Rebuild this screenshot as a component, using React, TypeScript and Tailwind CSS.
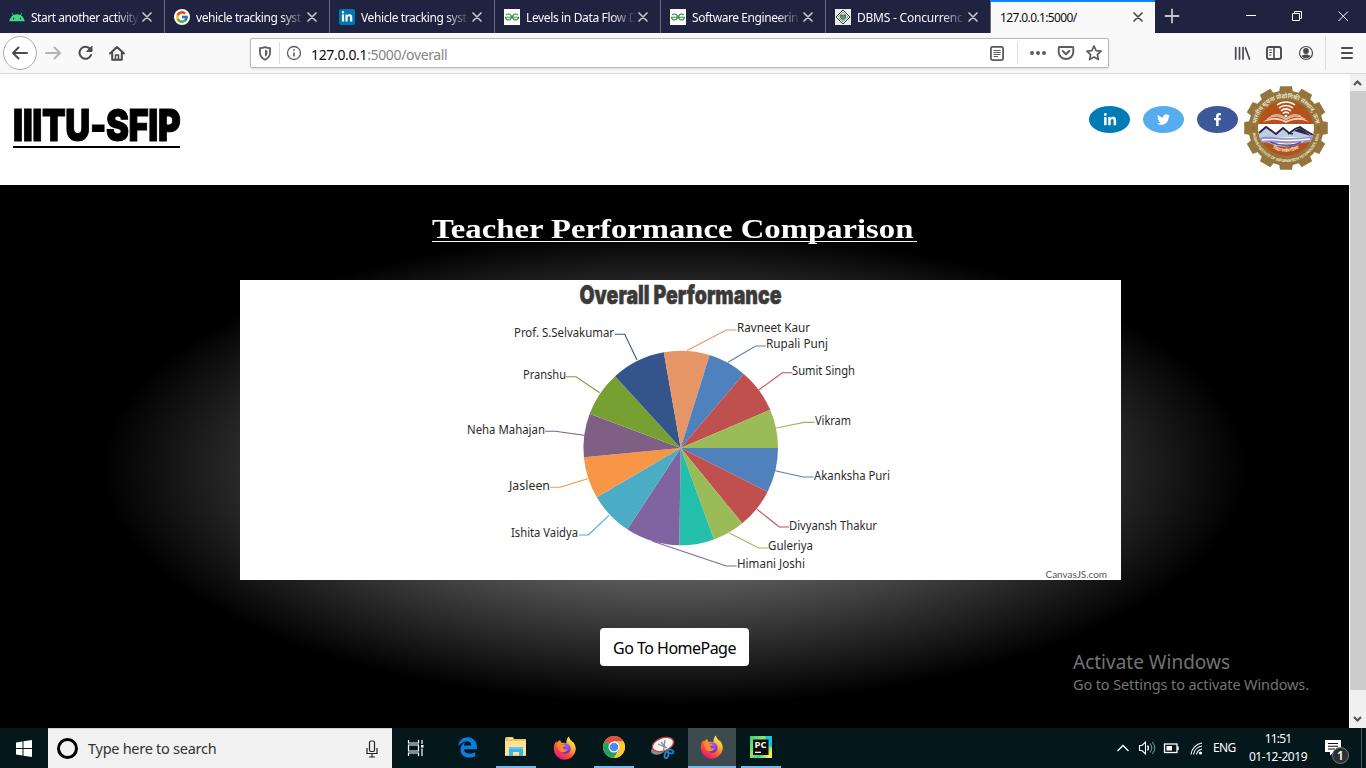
import React from "react";
import { FcGoogle } from "react-icons/fc";
import { FaEdgeLegacy, FaFacebookF, FaLinkedinIn, FaTwitter } from "react-icons/fa";
import { SiGeeksforgeeks } from "react-icons/si";

const UI = "font-['Noto_Sans',sans-serif]";

function AndroidIcon() {
  return (
    <svg width="16" height="16" viewBox="0 0 16 16">
      <path d="M0.3 12.3C0.7 9.8 2 7.7 4 6.5L2.8 4.3l.6-.3 1.2 2.1a8.300 8.300 0 0 1 6.800 0L12.600 4l.6.3L12 6.500c2 1.200 3.300 3.300 3.700 5.800z" fill="#3ddc84" />
      <circle cx="4.600" cy="9.600" r=".8" fill="#202340" />
      <circle cx="11.400" cy="9.600" r=".8" fill="#202340" />
    </svg>
  );
}

function GoogleTile() {
  return (
    <span className="flex size-4 items-center justify-center rounded-full bg-white">
      <FcGoogle size={14} />
    </span>
  );
}

function LinkedInTile() {
  return (
    <span className="flex size-4 items-center justify-center rounded-[2px] bg-[#0077b5] text-white">
      <FaLinkedinIn size={12} />
    </span>
  );
}

function GeeksTile() {
  return (
    <span className="flex size-4 items-center justify-center bg-white text-[#2f8d46]">
      <SiGeeksforgeeks size={14} />
    </span>
  );
}

function DiamondTile() {
  return (
    <svg width="16" height="16" viewBox="0 0 16 16">
      <rect width="16" height="16" fill="#e9ece9" />
      <path d="M8 1 15 8 8 15 1 8z" fill="#fff" stroke="#333" strokeWidth="1" />
      <path d="M8 3.300 12.700 8 8 12.700 3.300 8z" fill="#fff" stroke="#555" strokeWidth=".8" />
      <path d="M5.500 6h5v3L8 11 5.500 9z" fill="#4f9a70" stroke="#2d5e42" strokeWidth=".7" />
    </svg>
  );
}

function Close({ color }: { color: string }) {
  return (
    <svg width="10" height="10" viewBox="0 0 10 10" stroke={color} strokeWidth="1.700" strokeLinecap="round">
      <path d="M1 1l8 8M9 1 1 9" />
    </svg>
  );
}

const tabs = [
  { title: "Start another activity", icon: <AndroidIcon />, w: "w-[165px]", track: "tracking-[-0.48px]" },
  { title: "vehicle tracking syst", icon: <GoogleTile />, w: "w-[165px]", track: "tracking-[-0.4px]" },
  { title: "Vehicle tracking syst", icon: <LinkedInTile />, w: "w-[165px]", track: "tracking-[-0.4px]" },
  { title: "Levels in Data Flow D", icon: <GeeksTile />, w: "w-[166px]", track: "tracking-[-0.36px]" },
  { title: "Software Engineerin", icon: <GeeksTile />, w: "w-[165px]", track: "tracking-[-0.42px]" },
  { title: "DBMS - Concurrenc", icon: <DiamondTile />, w: "w-[165px]", track: "tracking-[-0.22px]" },
];

function TabBar() {
  return (
    <div className="flex h-[33px] shrink-0 bg-[#202340]">
      {tabs.map((t) => (
        <div key={t.title} className={`flex ${t.w} shrink-0 items-center border-r border-[#6a6b80] pl-[9px] pr-[12px]`}>
          <span className="flex w-4 shrink-0">{t.icon}</span>
          <span className={`ml-[6px] flex-1 overflow-hidden whitespace-nowrap pt-[2px] text-[12px] text-[#f9f9fa] [mask-image:linear-gradient(to_right,black_78%,transparent)] ${t.track}`}>
            {t.title}
          </span>
          <span className="ml-[2px] shrink-0"><Close color="#c3c4cf" /></span>
        </div>
      ))}
      <div className="flex w-[164px] shrink-0 items-center justify-between border-t-2 border-[#0a84ff] bg-[#f9f9fa] pb-[2px] pl-[9px] pr-[12px]">
        <span className="pt-[2px] text-[12px] tracking-[-0.62px] text-[#0c0c0d]">127.0.0.1:5000/</span>
        <Close color="#4a4a4f" />
      </div>
      <svg className="shrink-0" width="211" height="33" viewBox="1155 0 211 33" fill="none">
        <path d="M1172 9.500v13M1165.500 16h13" stroke="#c3c4cf" strokeWidth="1.800" strokeLinecap="round" />
        <path d="M1246 15.500h10" stroke="#fff" />
        <path d="M1292.500 13.500h7v7h-7zM1294.500 13v-1.500h7v7H1300" stroke="#fff" />
        <path d="M1338.500 11.500l9.500 9.500M1348 11.500l-9.500 9.500" stroke="#fff" />
      </svg>
    </div>
  );
}

function ToolBar() {
  return (
    <div className="flex h-[41px] shrink-0 border-b border-[#d7d7db] bg-[#f9f9fa]">
      <svg className="shrink-0" width="250" height="40" viewBox="0 33 250 40" fill="none" stroke="#4a4a4f" strokeWidth="2" strokeLinecap="round" strokeLinejoin="round">
        <circle cx="20" cy="53" r="16.500" fill="#fff" stroke="#adadb0" strokeWidth="1" />
        <path d="M13 53h14M18.500 47.500 13 53l5.500 5.500" />
        <path d="M46 53h14M54.500 47.500 60 53l-5.500 5.500" stroke="#b4b4b6" />
        <path d="M90.500 49.500a6 6 0 1 0 .6 5.500" />
        <path d="M92 46.500v5h-5z" fill="#4a4a4f" strokeWidth="1" />
        <path d="M110 53.500l7-6.500 7 6.500M112.200 53v6.700h9.600V53" />
        <path d="M115.500 59v-4h3v4" strokeWidth="1.500" />
      </svg>
      <div className="mt-[5px] flex h-[30px] w-[859px] shrink-0 items-center rounded-[2px] border border-[#b9b9bc] bg-white shadow-sm">
        <svg className="shrink-0" width="54" height="28" viewBox="251 39 54 28" fill="none" stroke="#5c5c60">
          <path d="M265 47.200c2 .8 3.500 1 5 1v4.600c0 3.300-2 5.500-5 6.900-3-1.400-5-3.600-5-6.900v-4.600c1.500 0 3-.2 5-1z" strokeWidth="1.800" />
          <path d="M265 50v6.800c1.600-1 2.400-2.200 2.400-4V50.500z" fill="#5c5c60" stroke="none" />
          <path d="M279.500 42v22" stroke="#dcdcde" />
          <circle cx="294" cy="53" r="6.500" strokeWidth="1.300" />
          <path d="M294 52.500v4M294 49.300v1.400" strokeWidth="1.600" />
        </svg>
        <span className="ml-[6px] mt-[2px] flex-1 text-[14px] tracking-[-0.35px] text-[#0c0c0d]">
          127.0.0.1<span className="text-[#848486]">:5000/overall</span>
        </span>
        <svg className="shrink-0" width="125" height="28" viewBox="983 39 125 28" fill="none" stroke="#5c5c60">
          <rect x="990.900" y="46.900" width="12.200" height="13.200" rx="1.500" strokeWidth="1.800" />
          <path d="M993.500 50.500h7M993.500 52.500h7M993.500 54.500h7M993.500 56.500h4.500" />
          <path d="M1017.500 42v22" stroke="#dcdcde" />
          <g fill="#5c5c60" stroke="none">
            <circle cx="1032" cy="53" r="2" /><circle cx="1038" cy="53" r="2" /><circle cx="1044" cy="53" r="2" />
          </g>
          <path d="M1059.500 47h13a.8.800 0 0 1 .8.800V52a7.300 7 0 0 1-14.600 0V47.800a.8.800 0 0 1 .8-.8z" strokeWidth="1.900" />
          <path d="M1062.700 51l3.300 3.200 3.300-3.200" strokeWidth="1.900" strokeLinecap="round" strokeLinejoin="round" />
          <path d="M1094 46l2.100 4.600 5 .6-3.700 3.400 1 4.900-4.400-2.500-4.400 2.500 1-4.900-3.700-3.400 5-.6z" strokeWidth="1.700" strokeLinejoin="round" />
        </svg>
      </div>
      <svg className="shrink-0" width="257" height="40" viewBox="1109 33 257 40" fill="none" stroke="#4a4a4f" strokeWidth="2" strokeLinecap="round">
        <path d="M1235.700 47.500v11.500M1239.500 47.500v11.500M1243 47.500v11.500M1245.500 48l4 11" strokeWidth="1.700" />
        <rect x="1267" y="47" width="14" height="12" rx="2" strokeWidth="1.900" />
        <path d="M1274 47v12" strokeWidth="1.600" />
        <path d="M1269.500 50h2M1269.500 52.500h2M1269.500 55h1.500" strokeWidth="1" />
        <circle cx="1306" cy="53" r="6.500" strokeWidth="1.200" />
        <circle cx="1306" cy="51" r="2.900" fill="#4a4a4f" stroke="none" />
        <path d="M1301.500 56c2.500-2 6.500-2 9 0-2 3-7 3-9 0z" fill="#4a4a4f" stroke="none" />
        <path d="M1325.500 36v34" stroke="#dcdcde" strokeWidth="1" />
        <path d="M1342 48h10M1342 53h10M1342 58h10" />
      </svg>
    </div>
  );
}

const teeth = Array.from({ length: 12 }, (_, i) => i * 30);

function Emblem() {
  return (
    <svg className="shrink-0" width="84" height="84" viewBox="-42 -42 84 84">
      <defs>
        <clipPath id="disc"><circle r="28" /></clipPath>
        <path id="arcTop" d="M-30 0A30 30 0 0 1 30 0" />
        <path id="arcBottom" d="M-33.500 4A33.700 33.700 0 0 0 33.500 4" />
        <path id="arcMotto" d="M-20 14A25 25 0 0 0 20 14" />
      </defs>
      <g fill="#94763c">
        <circle r="37.500" />
        {teeth.map((a) => (
          <path key={a} d="M-7 -35L-6 -41.800H6L7 -35z" transform={`rotate(${a})`} />
        ))}
      </g>
      <g clipPath="url(#disc)">
        <circle r="28" fill="#b4511d" />
        <rect x="-28" y="-4" width="56" height="18" fill="#fff" />
        <path d="M-28 6L-22 0-18 -1-11 6-3 1 3 5 9 0 15 -1 22 3 28 7V9H-28z" fill="#b9cfe6" />
        <path d="M-27 5L-20 -1-17 1-10 6-3 0 3 5 7 6M2 6L9 1 14 -1 20 3 27 7" fill="none" stroke="#29213f" strokeWidth="1.800" />
        <path d="M8 3l6-3 7 5 4 3z" fill="#2c2348" />
        <path d="M-28 10c12-4 22 3 56-2v5c-20 5-34 1-56 2z" fill="#9a91c9" />
        <path d="M-24 12c12-2 18 3 48-1" fill="none" stroke="#fff" strokeWidth="1.300" />
        <path d="M-18 14c8 6 28 6 36-1-14 4-22 2-36 1z" fill="#fff" />
        <path d="M-16 14c9 4 23 5 31 0" fill="none" stroke="#5459a4" strokeWidth="1.800" />
        <path d="M-23 -6c7-6 16-5 23-1 7-4 16-5 23 1-8-3-16-3-23 1-7-4-15-4-23-1z" fill="#f1cfbd" />
        <path d="M-19 -9c8-5 14-3 19 1 5-4 11-6 19-1M-15 -12c6-3 11-1 15 3 4-4 9-6 15-3" fill="none" stroke="#e9b69c" strokeWidth="1.200" />
        <g fill="none" stroke="#fff" strokeWidth="1.600">
          <path d="M-9 -23a13 11 0 0 1 18 0M-7 -20a10 9 0 0 1 14 0M-5 -17a7 7 0 0 1 10 0M-3 -14.500a4 4 0 0 1 6 0" />
        </g>
        <circle cy="-12" r="1.300" fill="#fff" />
      </g>
      <g fill="#f4ead8" fontFamily="'Noto Sans', 'Liberation Sans', sans-serif" fontWeight="600">
        <text fontSize="6"><textPath href="#arcTop" startOffset="4" textLength="86">भारतीय सूचना प्रौद्योगिकी संस्थान, ऊना</textPath></text>
        <text fontSize="3.800" fontWeight="700"><textPath href="#arcBottom" startOffset="1" textLength="95" lengthAdjust="spacingAndGlyphs">INDIAN INSTITUTE OF INFORMATION TECHNOLOGY, UNA</textPath></text>
        <text fontSize="4.800"><textPath href="#arcMotto" startOffset="9" textLength="28">विद्या सर्वत्र गौरवः</textPath></text>
      </g>
      <circle cx="-32.500" cy="0" r="1.500" fill="#b4511d" />
      <circle cx="32.500" cy="0" r="1.500" fill="#b4511d" />
    </svg>
  );
}

function SiteHeader() {
  return (
    <header className="flex h-[111px] shrink-0 bg-white">
      <div className="ml-[13px] mt-[31px] h-[43px] w-[167px] border-b-2 border-black">
        <h1 className="-mt-[1px] origin-left scale-x-[0.795] whitespace-nowrap font-['Inter',sans-serif] text-[43.500px] font-black leading-[43px] tracking-[-0.5px] text-black [-webkit-text-stroke:1px_black]">
          IIITU-SFIP
        </h1>
      </div>
      <div className="ml-auto mt-[32px] flex h-[27px] gap-[13px] text-white">
        <span className="flex w-[41px] items-center justify-center rounded-[50%] bg-[#007bb5]"><FaLinkedinIn size={14} /></span>
        <span className="flex w-[41px] items-center justify-center rounded-[50%] bg-[#55acee]"><FaTwitter size={13} /></span>
        <span className="flex w-[41px] items-center justify-center rounded-[50%] bg-[#3b5998]"><FaFacebookF size={13} /></span>
      </div>
      <div className="ml-[6px] mr-[21px] mt-[12px]"><Emblem /></div>
    </header>
  );
}

const cx = 440.7;
const cy = 168;
const radius = 97.3;

const slices: { end: number; color: string }[] = [
  { end: 26.7, color: "#4f81bc" },
  { end: 50.7, color: "#c0504e" },
  { end: 70, color: "#9bbb58" },
  { end: 90.8, color: "#23bfaa" },
  { end: 123.3, color: "#8064a1" },
  { end: 149.6, color: "#4aacc5" },
  { end: 174.5, color: "#f79647" },
  { end: 200.6, color: "#7f6084" },
  { end: 227.6, color: "#77a033" },
  { end: 260, color: "#33558b" },
  { end: 287.3, color: "#e59566" },
  { end: 310.4, color: "#4f81bc" },
  { end: 336.9, color: "#c0504e" },
  { end: 360, color: "#9bbb58" },
];

const labels: { name: string; x: number; y: number; w: number; left?: boolean; line: string; color: string }[] = [
  { name: "Ravneet Kaur", x: 497, y: 52, w: 73, line: "447,70.5 486.3,50 496.5,50", color: "#e59566" },
  { name: "Rupali Punj", x: 526, y: 68, w: 62, line: "488,82.3 515.7,66 525.7,66", color: "#4f81bc" },
  { name: "Sumit Singh", x: 552, y: 95, w: 63, line: "518.7,110 542.3,92.7 552.3,92.7", color: "#c0504e" },
  { name: "Vikram", x: 575, y: 145, w: 36, line: "536.3,148 564,142.4 574.7,142.4", color: "#9bbb58" },
  { name: "Akanksha Puri", x: 574, y: 200, w: 76, line: "535,190.7 563.3,197 573.7,197", color: "#4f81bc" },
  { name: "Divyansh Thakur", x: 549, y: 250, w: 88, line: "517,229.3 539.3,247 549,247", color: "#c0504e" },
  { name: "Guleriya", x: 528, y: 270, w: 45, line: "489.3,253 518.7,268 528.3,268", color: "#9bbb58" },
  { name: "Himani Joshi", x: 497, y: 288, w: 68, line: "412.7,261.3 486.3,286 496.7,286", color: "#8064a1" },
  { name: "Prof. S.Selvakumar", x: 374, y: 57, w: 100, left: true, line: "397,80 384.7,54.3 374.7,54.3", color: "#33558b" },
  { name: "Pranshu", x: 326, y: 99, w: 43, left: true, line: "359.7,112.7 336,96.7 326,96.7", color: "#77a033" },
  { name: "Neha Mahajan", x: 305, y: 154, w: 78, left: true, line: "344,155.3 315.3,151.3 305.3,151.3", color: "#7f6084" },
  { name: "Jasleen", x: 310, y: 210, w: 41, left: true, line: "347.7,198.7 320,207.3 310,207.3", color: "#f79647" },
  { name: "Ishita Vaidya", x: 338, y: 257, w: 67, left: true, line: "369,235.3 348.3,255 339,255", color: "#4aacc5" },
];

function slicePath(from: number, to: number) {
  const a = (from * Math.PI) / 180;
  const b = (to * Math.PI) / 180;
  return `M${cx} ${cy}L${cx + radius * Math.cos(a)} ${cy + radius * Math.sin(a)}A${radius} ${radius} 0 0 1 ${cx + radius * Math.cos(b)} ${cy + radius * Math.sin(b)}z`;
}

function PieChart() {
  return (
    <svg className="block shrink-0 bg-white" width="881" height="300" viewBox="0 0 881 300">
      <text transform="translate(339.500 24) scale(0.62 1)" fontFamily="Inter, sans-serif" fontWeight="900" fontSize="25.500" textLength="326" lengthAdjust="spacingAndGlyphs" fill="#3a3a3a" stroke="#3a3a3a" strokeWidth=".5">
        Overall Performance
      </text>
      {slices.map((s, i) => (
        <path key={i} d={slicePath(i ? slices[i - 1].end : 0, s.end)} fill={s.color} />
      ))}
      {labels.map((l) => (
        <g key={l.name}>
          <polyline points={l.line} fill="none" stroke={l.color} strokeWidth="1.100" />
          <text x={l.left ? l.x - l.w : l.x} y={l.y} textLength={l.w} lengthAdjust="spacingAndGlyphs" fontFamily="'Noto Sans', sans-serif" fontSize="11.700" fill="#2b2b2b">
            {l.name}
          </text>
        </g>
      ))}
      <text x="805.500" y="298" fontFamily="Lato, sans-serif" fontSize="10" textLength="61.500" fill="#555">CanvasJS.com</text>
    </svg>
  );
}

function Firefox() {
  return (
    <svg width="24" height="24" viewBox="0 0 24 24">
      <defs>
        <linearGradient id="fxBody" x1="20" y1="2" x2="6" y2="22" gradientUnits="userSpaceOnUse">
          <stop offset="0" stopColor="#fff44f" /><stop offset=".35" stopColor="#ffb22e" /><stop offset=".65" stopColor="#ff5634" /><stop offset="1" stopColor="#e8177e" />
        </linearGradient>
        <radialGradient id="fxGlobe" cx=".6" cy=".2" r=".9">
          <stop offset="0" stopColor="#a35cff" /><stop offset="1" stopColor="#4a2bb8" />
        </radialGradient>
      </defs>
      <path d="M16 .5c.3 2.500 2 3.600 3.300 5.300 1 .3 1.600 1 2 2 1 2 1.700 4 1.400 6.300A11 11 0 0 1 .8 12.200C.8 9.500 1.800 6.500 3.500 5c-.2.8 0 1.500.2 2 .8-1.300 2.300-2.400 3.600-3 0 1.400.6 2.600 2 3 1.800-.4 3-.3 4.200.5-.5-2.800.5-5.400 2.500-7z" fill="url(#fxBody)" />
      <circle cx="12.300" cy="12.500" r="5.300" fill="url(#fxGlobe)" />
      <path d="M3.800 8.500C6 7.200 8 7.300 9.500 8.500c1 .2 2.300.1 3 .7-.4 1.300-2 1.300-2.600 2.200.4 1.800 2.500 2.800 4.900 1.700-1.300 3.600-6.200 4.500-8.600 1.500C5 12.500 4 11 3.800 8.500z" fill="#ff8a2b" />
    </svg>
  );
}

function Chrome() {
  return (
    <svg width="24" height="24" viewBox="0 0 24 24">
      <circle cx="12" cy="12" r="11" fill="#fcc934" />
      <path d="M12 12 2.500 6.500a11 11 0 0 1 19 0H12z" fill="#dd5144" />
      <path d="M12 12 2.500 6.500A11 11 0 0 0 12 23l4.800-8.300z" fill="#1ea362" />
      <path d="M12 6.500h9.500A11 11 0 0 1 12 23l4.800-8.300z" fill="#fcc934" />
      <circle cx="12" cy="12" r="5.500" fill="#fff" />
      <circle cx="12" cy="12" r="4.300" fill="#4a8af4" />
    </svg>
  );
}

function Explorer() {
  return (
    <svg width="24" height="24" viewBox="0 0 24 24">
      <path d="M1 3.500 2 2h7l1 2h12v17H1z" fill="#f5c451" />
      <path d="M1 6h21v14H1z" fill="#ffe395" />
      <path d="M4 3.500h5" stroke="#fff2bd" />
      <path d="M5 12h14v9h-4v-4H9v4H5z" fill="#3ab3e9" />
      <path d="M5 12h14v2H5z" fill="#64c9f2" />
    </svg>
  );
}

function Snip() {
  return (
    <svg width="26" height="24" viewBox="0 0 26 24">
      <path d="M2 12l-1 4c3 4 9 3 13 0V9z" fill="#8b8f92" />
      <ellipse cx="13" cy="8.500" rx="11" ry="6.500" transform="rotate(-20 13 8.500)" fill="#f5f5f5" stroke="#cf4242" strokeWidth="1.300" />
      <path d="M8 8l9 4M15 4l-1.500 11M11 6l5 6" stroke="#8a8d90" strokeWidth="1.300" />
      <g fill="none" stroke="#2284c4" strokeWidth="1.800">
        <ellipse cx="16.500" cy="19" rx="1.800" ry="3.300" transform="rotate(15 16.500 19)" />
        <ellipse cx="20.500" cy="15.500" rx="3" ry="1.800" transform="rotate(20 20.500 15.500)" />
      </g>
    </svg>
  );
}

function PyCharm() {
  return (
    <svg width="22" height="22" viewBox="0 0 22 22">
      <defs>
        <linearGradient id="pc" x1="0" y1="0" x2="1" y2=".7">
          <stop offset="0" stopColor="#21d789" /><stop offset=".45" stopColor="#9be35a" /><stop offset=".7" stopColor="#2bd3a0" /><stop offset="1" stopColor="#f6ed55" />
        </linearGradient>
      </defs>
      <rect width="22" height="22" fill="url(#pc)" />
      <path d="M15 0h7v12l-5-4z" fill="#18c5e0" />
      <rect x="3" y="3.500" width="15.500" height="15.500" fill="#0b0b0b" />
      <text x="4.500" y="12" fontFamily="'Open Sans', sans-serif" fontWeight="700" fontSize="9.500" textLength="12" lengthAdjust="spacingAndGlyphs" fill="#fff">PC</text>
      <path d="M5 16.300h6" stroke="#fff" strokeWidth="1.300" />
    </svg>
  );
}

function Taskbar() {
  return (
    <footer className="flex h-10 shrink-0 bg-[#04171b] text-white">
      <div className="flex w-12 items-center justify-center">
        <svg width="16" height="17" viewBox="0 0 16 17" fill="#fff">
          <path d="M0 2.500 6.500 1.500V8H0zM7.500 1.300 16 0v8H7.500zM0 9h6.500v6.500L0 14.600zM7.500 9H16v8l-8.500-1.300z" />
        </svg>
      </div>
      <div className="flex w-[344px] items-center border-t border-[#d0d0d0] bg-[#f1f1f1] pl-[9px] pr-[13px]">
        <span className="size-[21px] rounded-full border-[3px] border-black" />
        <span className="ml-[10px] flex-1 text-[14.500px] tracking-[-0.27px] text-[#333]">Type here to search</span>
        <svg width="14" height="18" viewBox="0 0 14 18" fill="none" stroke="#222" strokeWidth="1.200">
          <rect x="4.500" y="1" width="5" height="10.500" rx="1.500" />
          <path d="M2 8v5.500h10V8M7 13.500V17M4 17h6" />
        </svg>
      </div>
      <div className="flex w-12 items-center justify-center">
        <svg width="18" height="16" viewBox="0 0 18 16" fill="none" stroke="#fff" strokeWidth="1.200">
          <path d="M1.500 0v3h10V0M1.500 16v-3h10v3M1.500 5h10v6h-10zM15 0v4M15 8.500V16" />
          <rect x="14" y="5" width="2.500" height="2.500" fill="#fff" stroke="none" />
        </svg>
      </div>
      <div className="ml-[3px] flex">
        <div className="flex w-12 items-center justify-center pb-[1px] text-[#0b7ddb]"><FaEdgeLegacy size={21} /></div>
        <div className="mx-[5px] flex w-10 items-center justify-center border-b-2 border-[#76b9ed]"><Explorer /></div>
        <div className="flex w-12 items-center justify-center"><Firefox /></div>
        <div className="ml-[5px] flex w-10 items-center justify-center border-b-2 border-[#76b9ed]"><Chrome /></div>
        <div className="flex w-[54px] items-center justify-center pl-[4px]"><Snip /></div>
        <div className="flex w-12 items-center justify-center border-b-2 border-[#76b9ed] bg-[#3d4a4e]"><Firefox /></div>
        <div className="ml-[5px] flex w-10 items-center justify-center border-b-2 border-[#76b9ed]"><PyCharm /></div>
      </div>
      <div className="ml-auto flex items-center">
        <svg width="90" height="40" viewBox="1113 728 90 40" fill="none" stroke="#fff" strokeWidth="1.300">
          <path d="M1117.500 751l5.500-5.500 5.500 5.500" />
          <path d="M1139.500 745.500h2.500l3.500-3.500v12l-3.500-3.500h-2.500z" strokeWidth="1.100" />
          <path d="M1147.500 745.500q2 2.500 0 5" />
          <path d="M1150 743.700q3.500 4.300 0 8.600M1152.300 742q5 6 0 12" stroke="#7d888b" strokeWidth="1.100" />
          <rect x="1164.500" y="744" width="12.500" height="8.500" />
          <path d="M1178 746.500v3.500" strokeWidth="1.500" />
          <rect x="1166.500" y="746" width="5.500" height="4.500" fill="#fff" stroke="none" />
          <path d="M1191 754.500a13 13 0 0 1 11-11.500M1193.500 754.500a10 10 0 0 1 8.500-8.500M1196.500 754.500a7 7 0 0 1 5.500-5.500" strokeWidth="1.100" />
          <circle cx="1200.500" cy="753" r="1.600" fill="#fff" stroke="none" />
        </svg>
        <span className="ml-[10px] w-[23px] whitespace-nowrap text-[12px] tracking-[-0.6px]">ENG</span>
        <div className="ml-[10px] flex w-[64px] flex-col items-center whitespace-nowrap text-[12px] leading-[18px] tracking-[-0.45px]">
          <span className="tracking-[-0.8px]">11:51</span>
          <span>01-12-2019</span>
        </div>
        <svg className="ml-[12px]" width="44" height="40" viewBox="1322 728 44 40">
          <path d="M1325 740h16v12h-7l-4 3.500V752h-5z" fill="#fff" />
          <path d="M1328 743.500h10M1328 746.200h10M1328 749h7" stroke="#04171b" strokeWidth="1.100" />
          <circle cx="1340.500" cy="755.500" r="8" fill="#2c3033" stroke="#777d80" strokeWidth="1" />
          <text x="1340.500" y="759.700" textAnchor="middle" fontFamily="'Noto Sans', sans-serif" fontSize="12" fontWeight="600" fill="#fff">1</text>
          <path d="M1361.500 728v40" stroke="#4c5a5d" />
        </svg>
      </div>
    </footer>
  );
}

export default function App() {
  return (
    <div className={`relative flex h-[768px] w-[1366px] flex-col overflow-hidden bg-black ${UI}`}>
      <TabBar />
      <ToolBar />
      <div className="flex h-[654px] shrink-0">
        <div className="flex w-[1349px] shrink-0 flex-col">
          <SiteHeader />
          <main className="flex flex-1 flex-col items-center bg-[radial-gradient(ellipse_573px_237px_at_675px_283px,#a9a9a9,#000)]">
            <h2 className="mt-[26px] h-[31px] w-[485px] whitespace-nowrap font-['Liberation_Serif',serif] text-[28px] font-bold leading-[36px] text-white">
              <span className="block h-[31px] w-[485px] border-b border-white">
                <span className="inline-block origin-left scale-x-[1.168]">Teacher Performance Comparison</span>
              </span>
            </h2>
            <div className="ml-[12px] mt-[38px]"><PieChart /></div>
            <button className="mt-[48px] h-[38px] w-[149px] whitespace-nowrap rounded-[4px] bg-white pt-[1px] text-[16px] tracking-[-0.52px] text-black">Go To HomePage</button>
          </main>
        </div>
        <div className="flex w-[17px] flex-col items-center border-l border-white bg-[#f0f0f0]">
          <svg width="16" height="17" viewBox="0 0 16 17" fill="none" stroke="#555" strokeWidth="2.200"><path d="M4 11l3.500-3.500L11 11" /></svg>
          <div className="w-[16px] flex-1 bg-[#cdcdcd]" />
          <svg className="mt-[21px]" width="16" height="17" viewBox="0 0 16 17" fill="none" stroke="#555" strokeWidth="2.200"><path d="M4 6l3.500 3.500L11 6" /></svg>
        </div>
      </div>
      <Taskbar />
      <div className="absolute left-[1073px] top-[649px] whitespace-nowrap text-[#737373]">
        <p className="text-[19px] leading-[26px]">Activate Windows</p>
        <p className="-mt-[1px] text-[14.500px] leading-[20px] tracking-[-0.12px]">Go to Settings to activate Windows.</p>
      </div>
    </div>
  );
}
